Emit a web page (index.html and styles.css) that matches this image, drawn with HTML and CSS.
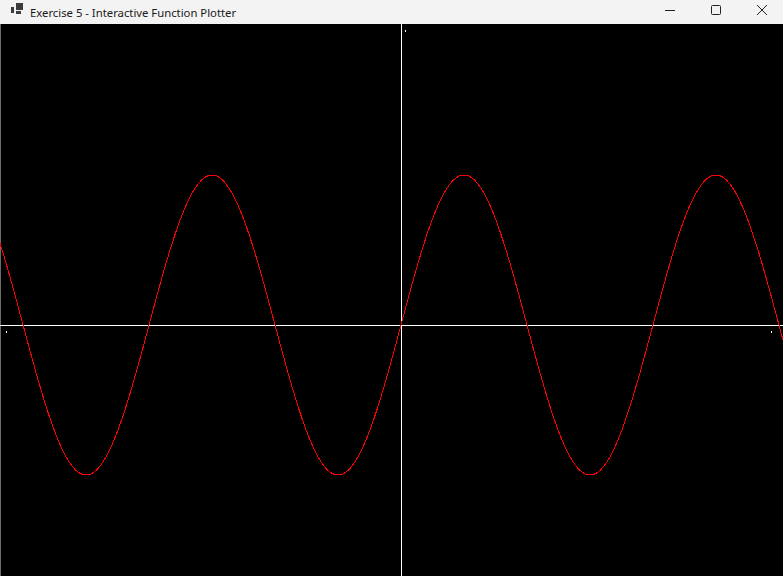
FILE: index.html
```html
<!DOCTYPE html>
<html>
<head>
<meta charset="utf-8">
<title>Exercise 5 - Interactive Function Plotter</title>
<link rel="stylesheet" href="styles.css">
</head>
<body>
<div class="window">
  <div class="titlebar">
    <svg class="app-icon" width="16" height="16" viewBox="0 0 16 16">
      <rect x="0" y="4" width="3" height="6" fill="#3c3c3c"/>
      <rect x="5" y="0" width="7" height="7" fill="#3c3c3c"/>
      <rect x="5" y="8" width="5" height="3" fill="#3c3c3c"/>
    </svg>
    <span class="title">Exercise 5 - Interactive Function Plotter</span>
    <div class="controls">
      <div class="ctl">
        <svg width="12" height="12" viewBox="0 0 12 12"><line x1="1" y1="6.5" x2="11" y2="6.5" stroke="#222" stroke-width="1"/></svg>
      </div>
      <div class="ctl">
        <svg width="12" height="12" viewBox="0 0 12 12"><rect x="1.5" y="1.5" width="9" height="9" rx="1" fill="none" stroke="#222" stroke-width="1"/></svg>
      </div>
      <div class="ctl">
        <svg width="12" height="12" viewBox="0 0 12 12"><path d="M1 1 L11 11 M11 1 L1 11" stroke="#222" stroke-width="1"/></svg>
      </div>
    </div>
  </div>
  <div class="canvas">
    <svg id="plot" width="783" height="552" viewBox="0 0 783 552" shape-rendering="crispEdges">
      <rect x="0" y="0" width="1" height="552" fill="#6b6b6b"/>
      <rect x="401" y="0" width="1" height="552" fill="#ffffff"/>
      <rect x="0" y="301" width="783" height="1" fill="#ffffff"/>
      <rect x="405" y="6" width="1" height="2" fill="#ffffff"/>
      <rect x="6" y="307" width="1" height="2" fill="#ffffff"/>
      <rect x="771" y="307" width="1" height="2" fill="#ffffff"/>
      <polyline id="curve" fill="none" stroke="#ff0000" stroke-width="1" points=""/>
    </svg>
  </div>
</div>
<script src="script.js"></script>
</body>
</html>
```
FILE: styles.css
```css
html, body {
  margin: 0;
  padding: 0;
  background: #000;
  overflow: hidden;
}
.window {
  width: 783px;
  height: 576px;
  display: flex;
  flex-direction: column;
  overflow: hidden;
}
.titlebar {
  height: 24px;
  background: #f3f3f3;
  display: flex;
  align-items: center;
  font-family: "Noto Sans", "Open Sans", sans-serif;
  font-size: 11.3px;
  color: #1a1a1a;
}
.app-icon {
  margin-left: 11px;
  align-self: flex-start;
  margin-top: 3px;
}
.title {
  margin-left: 3px;
  white-space: nowrap;
}
.controls {
  margin-left: auto;
  margin-right: -2px;
  display: flex;
  height: 100%;
}
.ctl {
  width: 46px;
  height: 100%;
  display: flex;
  align-items: center;
  justify-content: center;
}
.ctl svg {
  display: block;
  margin-top: -5px;
}
.canvas {
  flex: 1;
  background: #000;
}
.canvas svg {
  display: block;
}
```
FILE: script.js
```js
(function () {
  var pts = [];
  var cx = 401, cy = 301, sx = 40.1, amp = 150;
  for (var x = 0; x <= 783; x += 1) {
    var y = cy - amp * Math.sin((x - cx) / sx);
    pts.push(x + "," + y.toFixed(2));
  }
  document.getElementById("curve").setAttribute("points", pts.join(" "));
})();
```
